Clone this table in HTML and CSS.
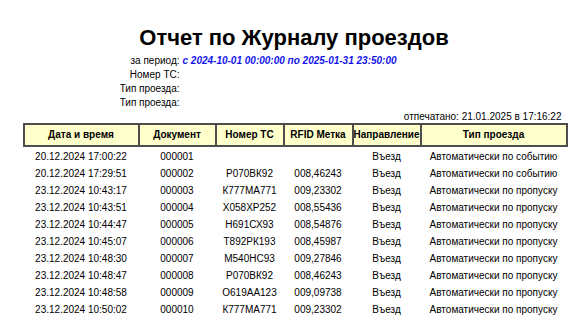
FILE: index.html
```html
<!DOCTYPE html>
<html lang="ru">
<head>
<meta charset="utf-8">
<title>Отчет по Журналу проездов</title>
<link rel="stylesheet" href="styles.css">
</head>
<body>
<div class="report">
  <h1 class="title">Отчет по Журналу проездов</h1>
  <div class="params">
    <div class="label">за период:</div><div class="value period">с 2024-10-01 00:00:00 по 2025-01-31 23:50:00</div>
    <div class="label">Номер ТС:</div><div class="value"></div>
    <div class="label">Тип проезда:</div><div class="value"></div>
    <div class="label">Тип проезда:</div><div class="value"></div>
  </div>
  <div class="printed">отпечатано: 21.01.2025 в 17:16:22</div>
  <table class="log">
    <colgroup>
      <col class="c-date"><col class="c-doc"><col class="c-num"><col class="c-rfid"><col class="c-dir"><col class="c-type">
    </colgroup>
    <thead>
      <tr><th>Дата и время</th><th>Документ</th><th>Номер ТС</th><th>RFID Метка</th><th>Направление</th><th>Тип проезда</th></tr>
    </thead>
    <tbody>
      <tr><td>20.12.2024 17:00:22</td><td>000001</td><td></td><td></td><td>Въезд</td><td>Автоматически по событию</td></tr>
      <tr><td>20.12.2024 17:29:51</td><td>000002</td><td>Р070ВК92</td><td>008,46243</td><td>Въезд</td><td>Автоматически по событию</td></tr>
      <tr><td>23.12.2024 10:43:17</td><td>000003</td><td>К777МА771</td><td>009,23302</td><td>Въезд</td><td>Автоматически по пропуску</td></tr>
      <tr><td>23.12.2024 10:43:51</td><td>000004</td><td>Х058ХР252</td><td>008,55436</td><td>Въезд</td><td>Автоматически по пропуску</td></tr>
      <tr><td>23.12.2024 10:44:47</td><td>000005</td><td>Н691СХ93</td><td>008,54876</td><td>Въезд</td><td>Автоматически по пропуску</td></tr>
      <tr><td>23.12.2024 10:45:07</td><td>000006</td><td>Т892РК193</td><td>008,45987</td><td>Въезд</td><td>Автоматически по пропуску</td></tr>
      <tr><td>23.12.2024 10:48:30</td><td>000007</td><td>М540НС93</td><td>009,27846</td><td>Въезд</td><td>Автоматически по пропуску</td></tr>
      <tr><td>23.12.2024 10:48:47</td><td>000008</td><td>Р070ВК92</td><td>008,46243</td><td>Въезд</td><td>Автоматически по пропуску</td></tr>
      <tr><td>23.12.2024 10:48:58</td><td>000009</td><td>О619АА123</td><td>009,09738</td><td>Въезд</td><td>Автоматически по пропуску</td></tr>
      <tr><td>23.12.2024 10:50:02</td><td>000010</td><td>К777МА771</td><td>009,23302</td><td>Въезд</td><td>Автоматически по пропуску</td></tr>
    </tbody>
  </table>
</div>
</body>
</html>
```
FILE: styles.css
```css
html, body {
  margin: 0;
  padding: 0;
  background: #fff;
}
body {
  font-family: "Liberation Sans", Arial, sans-serif;
  font-size: 10px;
  color: #000;
}
.report {
  width: 543px;
  margin: 0 auto;
  padding-top: 24px;
}
.title {
  margin: 0 0 2px;
  font-size: 22px;
  line-height: 28px;
  font-weight: bold;
  text-align: center;
}
.params {
  display: grid;
  grid-template-columns: 157px auto;
  column-gap: 3px;
  line-height: 14px;
}
.label {
  text-align: right;
}
.value {
  min-height: 14px;
}
.period {
  color: #1414ee;
  font-weight: bold;
  font-style: italic;
}
.printed {
  text-align: right;
  line-height: 13px;
  padding-right: 4px;
}
.log {
  margin-top: 0;
  width: 543px;
  table-layout: fixed;
  border-collapse: collapse;
}
.c-date { width: 115px; }
.c-doc { width: 77px; }
.c-num { width: 68px; }
.c-rfid { width: 69px; }
.c-dir { width: 68px; }
.c-type { width: 146px; }
.log th {
  background: #ffffcc;
  border: 2px solid #4d4d4d;
  height: 20px;
  padding: 0;
  font-weight: bold;
  line-height: 12px;
  text-align: center;
  white-space: nowrap;
  overflow: hidden;
}
.log td {
  height: 17px;
  padding: 0;
  line-height: 12px;
  text-align: center;
  white-space: nowrap;
}
.log tbody tr:first-child td {
  padding-top: 1px;
  height: 17px;
}
```
